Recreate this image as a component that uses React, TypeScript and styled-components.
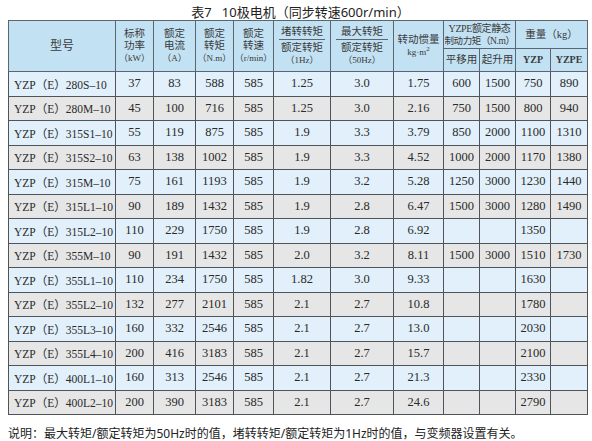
import styled, { createGlobalStyle } from "styled-components";

const GlobalStyle = createGlobalStyle`
  body {
    margin: 0;
    background: #ffffff;
  }
`;

const Page = styled.div`
  width: 592px;
  height: 441px;
  padding: 4px 5px 0 8px;
  box-sizing: border-box;
  display: flex;
  flex-direction: column;
  color: #2d2d2d;
`;

const Caption = styled.div`
  font-family: "Noto Sans", "Noto Sans CJK SC", sans-serif;
  font-size: 13px;
  line-height: 16px;
  text-align: center;
  padding-left: 6px;
  height: 16px;
  color: #222;
`;

const Table = styled.table`
  border-collapse: collapse;
  table-layout: fixed;
  width: 579px;
  font-family: "Liberation Serif", "Noto Sans CJK SC", serif;
  font-size: 12.5px;
`;

const HeadCell = styled.th<{ $h?: number; $bold?: boolean }>`
  background: #c2e1f3;
  border: 1px solid #5a6670;
  font-weight: ${(p) => (p.$bold ? "bold" : "normal")};
  font-family: "Liberation Serif", "Noto Sans CJK SC", serif;
  font-size: ${(p) => (p.$bold ? "10px" : "10.5px")};
  line-height: 12px;
  color: #3a3a3a;
  padding: 0;
  text-align: center;
  vertical-align: middle;
  white-space: nowrap;
  overflow: hidden;
  height: ${(p) => (p.$h ? `${p.$h}px` : "auto")};
`;

const Title = styled.span`
  font-size: 12px;
`;

const Tight = styled.span<{ $size: number }>`
  font-size: ${(p) => p.$size}px;
  letter-spacing: -0.4px;
`;

const Unit = styled.div`
  font-size: 9px;
  line-height: 12px;
`;

const Fraction = styled.div`
  margin: 0 5px 2px;
  border-bottom: 1px solid #5a6670;
  padding-bottom: 1px;
`;

const Row = styled.tr<{ $alt: boolean }>`
  background: ${(p) => (p.$alt ? "#e6e6e6" : "#e1f0fa")};
  height: 24.5px;
`;

const Cell = styled.td`
  border: 1px solid #4f5459;
  padding: 0;
  text-align: center;
  vertical-align: middle;
  color: #2a2a2a;
  white-space: nowrap;
`;

const ModelCell = styled(Cell)`
  text-align: left;
  padding-left: 5px;
  font-size: 11.5px;
`;

const Note = styled.div`
  font-family: "Noto Sans", "Noto Sans CJK SC", sans-serif;
  font-size: 12px;
  line-height: 16px;
  margin-top: 11px;
  color: #222;
`;

const widths = [107, 38, 42, 38, 40, 57, 63, 50, 36, 36, 35, 37];

const rows: string[][] = [
  ["280S–10", "37", "83", "588", "585", "1.25", "3.0", "1.75", "600", "1500", "750", "890"],
  ["280M–10", "45", "100", "716", "585", "1.25", "3.0", "2.16", "750", "1500", "800", "940"],
  ["315S1–10", "55", "119", "875", "585", "1.9", "3.3", "3.79", "850", "2000", "1100", "1310"],
  ["315S2–10", "63", "138", "1002", "585", "1.9", "3.3", "4.52", "1000", "2000", "1170", "1380"],
  ["315M–10", "75", "161", "1193", "585", "1.9", "3.2", "5.28", "1250", "3000", "1230", "1440"],
  ["315L1–10", "90", "189", "1432", "585", "1.9", "2.8", "6.47", "1500", "3000", "1280", "1490"],
  ["315L2–10", "110", "229", "1750", "585", "1.9", "2.8", "6.92", "", "", "1350", ""],
  ["355M–10", "90", "191", "1432", "585", "2.0", "3.2", "8.11", "1500", "3000", "1510", "1730"],
  ["355L1–10", "110", "234", "1750", "585", "1.82", "3.0", "9.33", "", "", "1630", ""],
  ["355L2–10", "132", "277", "2101", "585", "2.1", "2.7", "10.8", "", "", "1780", ""],
  ["355L3–10", "160", "332", "2546", "585", "2.1", "2.7", "13.0", "", "", "2030", ""],
  ["355L4–10", "200", "416", "3183", "585", "2.1", "2.7", "15.7", "", "", "2100", ""],
  ["400L1–10", "160", "313", "2546", "585", "2.1", "2.7", "21.3", "", "", "2330", ""],
  ["400L2–10", "200", "390", "3183", "585", "2.1", "2.7", "24.6", "", "", "2790", ""],
];

function App() {
  return (
    <Page>
      <GlobalStyle />
      <Caption>表7&nbsp;&nbsp;&nbsp;10极电机（同步转速600r/min）</Caption>
      <Table>
        <colgroup>
          {widths.map((w, i) => (
            <col key={i} style={{ width: w }} />
          ))}
        </colgroup>
        <thead>
          <tr>
            <HeadCell rowSpan={2}>
              <Title>型号</Title>
            </HeadCell>
            <HeadCell rowSpan={2}>
              标称
              <br />
              功率
              <Unit>（kW）</Unit>
            </HeadCell>
            <HeadCell rowSpan={2}>
              额定
              <br />
              电流
              <Unit>（A）</Unit>
            </HeadCell>
            <HeadCell rowSpan={2}>
              额定
              <br />
              转矩
              <Unit>（N.m）</Unit>
            </HeadCell>
            <HeadCell rowSpan={2}>
              额定
              <br />
              转速
              <Unit>（r/min）</Unit>
            </HeadCell>
            <HeadCell rowSpan={2}>
              <Fraction>堵转转矩</Fraction>
              额定转矩
              <Unit>（1Hz）</Unit>
            </HeadCell>
            <HeadCell rowSpan={2}>
              <Fraction>最大转矩</Fraction>
              额定转矩
              <Unit>（50Hz）</Unit>
            </HeadCell>
            <HeadCell rowSpan={2}>
              转动惯量
              <Unit>
                kg·m<sup style={{ fontSize: 7, lineHeight: 0 }}>2</sup>
              </Unit>
            </HeadCell>
            <HeadCell colSpan={2} $h={27}>
              <Tight $size={10}>YZPE额定静态</Tight>
              <br />
              <Tight $size={9.5}>制动力矩（N.m）</Tight>
            </HeadCell>
            <HeadCell colSpan={2}>重量（kg）</HeadCell>
          </tr>
          <tr>
            <HeadCell $h={22}>平移用</HeadCell>
            <HeadCell>起升用</HeadCell>
            <HeadCell $bold>YZP</HeadCell>
            <HeadCell $bold>YZPE</HeadCell>
          </tr>
        </thead>
        <tbody>
          {rows.map((r, i) => (
            <Row key={i} $alt={i % 2 === 1}>
              <ModelCell>YZP（E）{r[0]}</ModelCell>
              {r.slice(1).map((v, j) => (
                <Cell key={j}>{v}</Cell>
              ))}
            </Row>
          ))}
        </tbody>
      </Table>
      <Note>
        说明：最大转矩/额定转矩为50Hz时的值，堵转转矩/额定转矩为1Hz时的值，与变频器设置有关。
      </Note>
    </Page>
  );
}

export default App;
